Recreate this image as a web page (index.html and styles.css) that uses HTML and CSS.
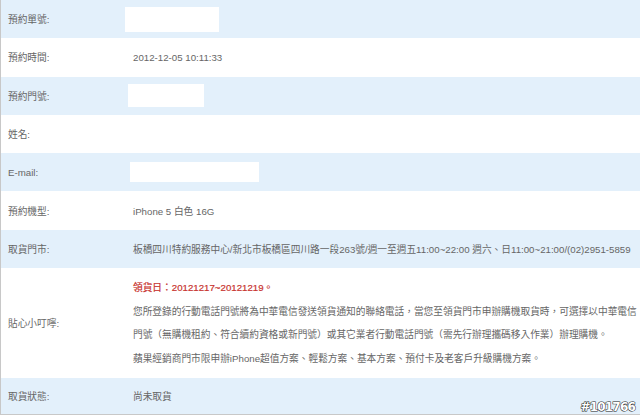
FILE: index.html
```html
<!DOCTYPE html>
<html>

<head>
    <title>預約資料</title>
    <link rel="stylesheet" href="styles.css">
</head>

<body>
    <div class="order">
        <div class="row blue">
            <div class="label">預約單號:</div>
            <div class="value"><span class="mask mask-order"></span></div>
        </div>
        <div class="row">
            <div class="label">預約時間:</div>
            <div class="value">2012-12-05 10:11:33</div>
        </div>
        <div class="row blue">
            <div class="label">預約門號:</div>
            <div class="value"><span class="mask mask-phone"></span></div>
        </div>
        <div class="row">
            <div class="label">姓名:</div>
            <div class="value"></div>
        </div>
        <div class="row blue">
            <div class="label">E-mail:</div>
            <div class="value"><span class="mask mask-mail"></span></div>
        </div>
        <div class="row">
            <div class="label">預約機型:</div>
            <div class="value">iPhone 5 白色 16G</div>
        </div>
        <div class="row blue">
            <div class="label">取貨門市:</div>
            <div class="value">板橋四川特約服務中心/新北市板橋區四川路一段263號/週一至週五11:00~22:00 週六、日11:00~21:00/(02)2951-5859</div>
        </div>
        <div class="row tips">
            <div class="label">貼心小叮嚀:</div>
            <div class="value">
                <p class="red">領貨日：20121217~20121219。</p>
                <p>您所登錄的行動電話門號將為中華電信發送領貨通知的聯絡電話，當您至領貨門市申辦購機取貨時，可選擇以中華電信<br>門號（無購機租約、符合續約資格或新門號）或其它業者行動電話門號（需先行辦理攜碼移入作業）辦理購機。</p>
                <p>蘋果經銷商門市限申辦iPhone超值方案、輕鬆方案、基本方案、預付卡及老客戶升級購機方案。</p>
            </div>
        </div>
        <div class="row blue last">
            <div class="label">取貨狀態:</div>
            <div class="value">尚未取貨</div>
        </div>
    </div>
    <div class="watermark">#101766</div>
</body>

</html>
```

FILE: styles.css
```css
body {
    margin: 0;
    font-family: 'Liberation Sans', 'Noto Sans CJK TC', sans-serif;
    font-size: 9.7px;
    color: #666;
    background-color: #fff;
}

.order {
    border-left: 1px solid #c8c8c8;
    border-bottom: 1px solid #c8c8c8;
}

.row {
    display: flex;
    align-items: center;
    height: 38.3px;
    background-color: #fff;
}

.row.blue {
    background-color: #e3f0fb;
}

.row.tips {
    height: 110px;
}

.row.last {
    height: 36px;
}

.label {
    width: 125px;
    padding-left: 7px;
    flex-shrink: 0;
}

.value {
    flex: 1;
    white-space: nowrap;
}

.tips .value {
    align-self: flex-start;
    padding-top: 8px;
    line-height: 23.5px;
}

.tips p {
    margin: 0;
}

.red {
    color: #c8322e;
    -webkit-text-stroke: 0.2px #c8322e;
}

.mask {
    display: inline-block;
    background-color: #fff;
    vertical-align: middle;
}

.mask-order {
    width: 94px;
    height: 25px;
    margin-left: -8px;
}

.mask-phone {
    width: 76px;
    height: 23px;
    margin-left: -5px;
}

.mask-mail {
    width: 129px;
    height: 20px;
    margin-left: -3px;
}

.watermark {
    position: absolute;
    right: 5px;
    top: 400px;
    font-family: 'DejaVu Sans', sans-serif;
    font-weight: bold;
    font-size: 12px;
    color: #fff;
    -webkit-text-stroke: 1px #222;
    paint-order: stroke fill;
    letter-spacing: -0.8px;
}
```
